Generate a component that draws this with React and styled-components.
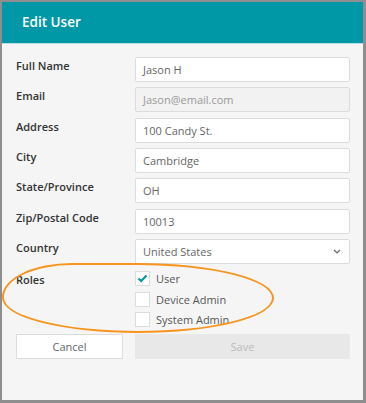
import styled, { createGlobalStyle } from "styled-components";

const GlobalStyle = createGlobalStyle`
  html, body {
    margin: 0;
    padding: 0;
    background: #8e8e8e;
  }
  * {
    box-sizing: border-box;
  }
`;

const Frame = styled.div`
  width: 366px;
  height: 403px;
  padding: 2px 3px 3px 2px;
  background: #8e8e8e;
  font-family: "Open Sans", "Liberation Sans", sans-serif;
`;

const Dialog = styled.div`
  position: relative;
  height: 100%;
  background: #f5f5f5;
  display: flex;
  flex-direction: column;
`;

const Header = styled.div`
  height: 42px;
  background: #0097a7;
  border-bottom: 1px solid #b9dfe3;
  color: #fff;
  font-size: 13.5px;
  font-weight: 600;
  display: flex;
  align-items: center;
  padding-left: 20px;
  padding-bottom: 1px;
`;

const Form = styled.div`
  display: flex;
  flex-direction: column;
  gap: 5.35px;
  padding: 13px 13px 0 14px;
`;

const Row = styled.div`
  display: grid;
  grid-template-columns: 119px 1fr;
  align-items: start;
`;

const Label = styled.div`
  font-size: 11px;
  font-weight: 600;
  color: #333;
  line-height: 16px;
  padding-top: ${(p) => p.$top || 0}px;
`;

const Input = styled.div`
  height: 25px;
  border: 1px solid #dcdcdc;
  border-radius: 2px;
  background: ${(p) => (p.disabled ? "#f2f2f2" : "#fff")};
  color: ${(p) => (p.disabled ? "#999" : "#666")};
  font-size: 11px;
  padding-left: 7px;
  padding-right: 8px;
  display: flex;
  align-items: center;
  justify-content: space-between;
`;

const Checks = styled.div`
  display: flex;
  flex-direction: column;
  gap: 5.5px;
  padding-top: 2px;
`;

const CheckRow = styled.div`
  display: flex;
  align-items: center;
  gap: 6px;
  font-size: 11px;
  color: #555;
  line-height: 15px;
`;

const Box = styled.div`
  width: 15px;
  height: 15px;
  border: 1px solid #dcdcdc;
  background: #fff;
  display: flex;
  align-items: center;
  justify-content: center;
`;

const Buttons = styled.div`
  display: grid;
  grid-template-columns: 107px 1fr;
  gap: 12px;
  margin-top: 1px;
`;

const Button = styled.div`
  height: 25px;
  border: 1px solid ${(p) => (p.disabled ? "#e8e8e8" : "#dcdcdc")};
  background: ${(p) => (p.disabled ? "#e8e8e8" : "#fff")};
  color: ${(p) => (p.disabled ? "#bbb" : "#666")};
  font-size: 11px;
  display: flex;
  align-items: center;
  justify-content: center;
`;

const Highlight = styled.div`
  position: absolute;
  left: 0;
  top: 261px;
  width: 272px;
  height: 70px;
  border: 2px solid #f7941d;
  border-radius: 50% / 50%;
  border-top-left-radius: 70px 34px;
  pointer-events: none;
`;

const fields = [
  ["Full Name", "Jason H"],
  ["Email", "Jason@email.com", true],
  ["Address", "100 Candy St."],
  ["City", "Cambridge"],
  ["State/Province", "OH"],
  ["Zip/Postal Code", "10013"],
];

function Check({ checked, children }) {
  return (
    <CheckRow>
      <Box>
        {checked && (
          <svg width="11" height="9" viewBox="0 0 11 9">
            <path d="M1.5 4.5 L4.2 7 L9.5 1.5" fill="none" stroke="#0097a7" strokeWidth="2.2" />
          </svg>
        )}
      </Box>
      {children}
    </CheckRow>
  );
}

export default function App() {
  return (
    <>
      <GlobalStyle />
      <Frame>
        <Dialog>
          <Header>Edit User</Header>
          <Form>
            {fields.map(([label, value, disabled]) => (
              <Row key={label}>
                <Label $top={1}>{label}</Label>
                <Input disabled={disabled}>{value}</Input>
              </Row>
            ))}
            <Row>
              <Label $top={1}>Country</Label>
              <Input>
                United States
                <svg width="8" height="5" viewBox="0 0 8 5">
                  <path d="M1 1 L4 4 L7 1" fill="none" stroke="#666" strokeWidth="1.2" />
                </svg>
              </Input>
            </Row>
            <Row>
              <Label $top={3}>Roles</Label>
              <Checks>
                <Check checked>User</Check>
                <Check>Device Admin</Check>
                <Check>System Admin</Check>
              </Checks>
            </Row>
            <Buttons>
              <Button>Cancel</Button>
              <Button disabled>Save</Button>
            </Buttons>
          </Form>
          <Highlight />
        </Dialog>
      </Frame>
    </>
  );
}
